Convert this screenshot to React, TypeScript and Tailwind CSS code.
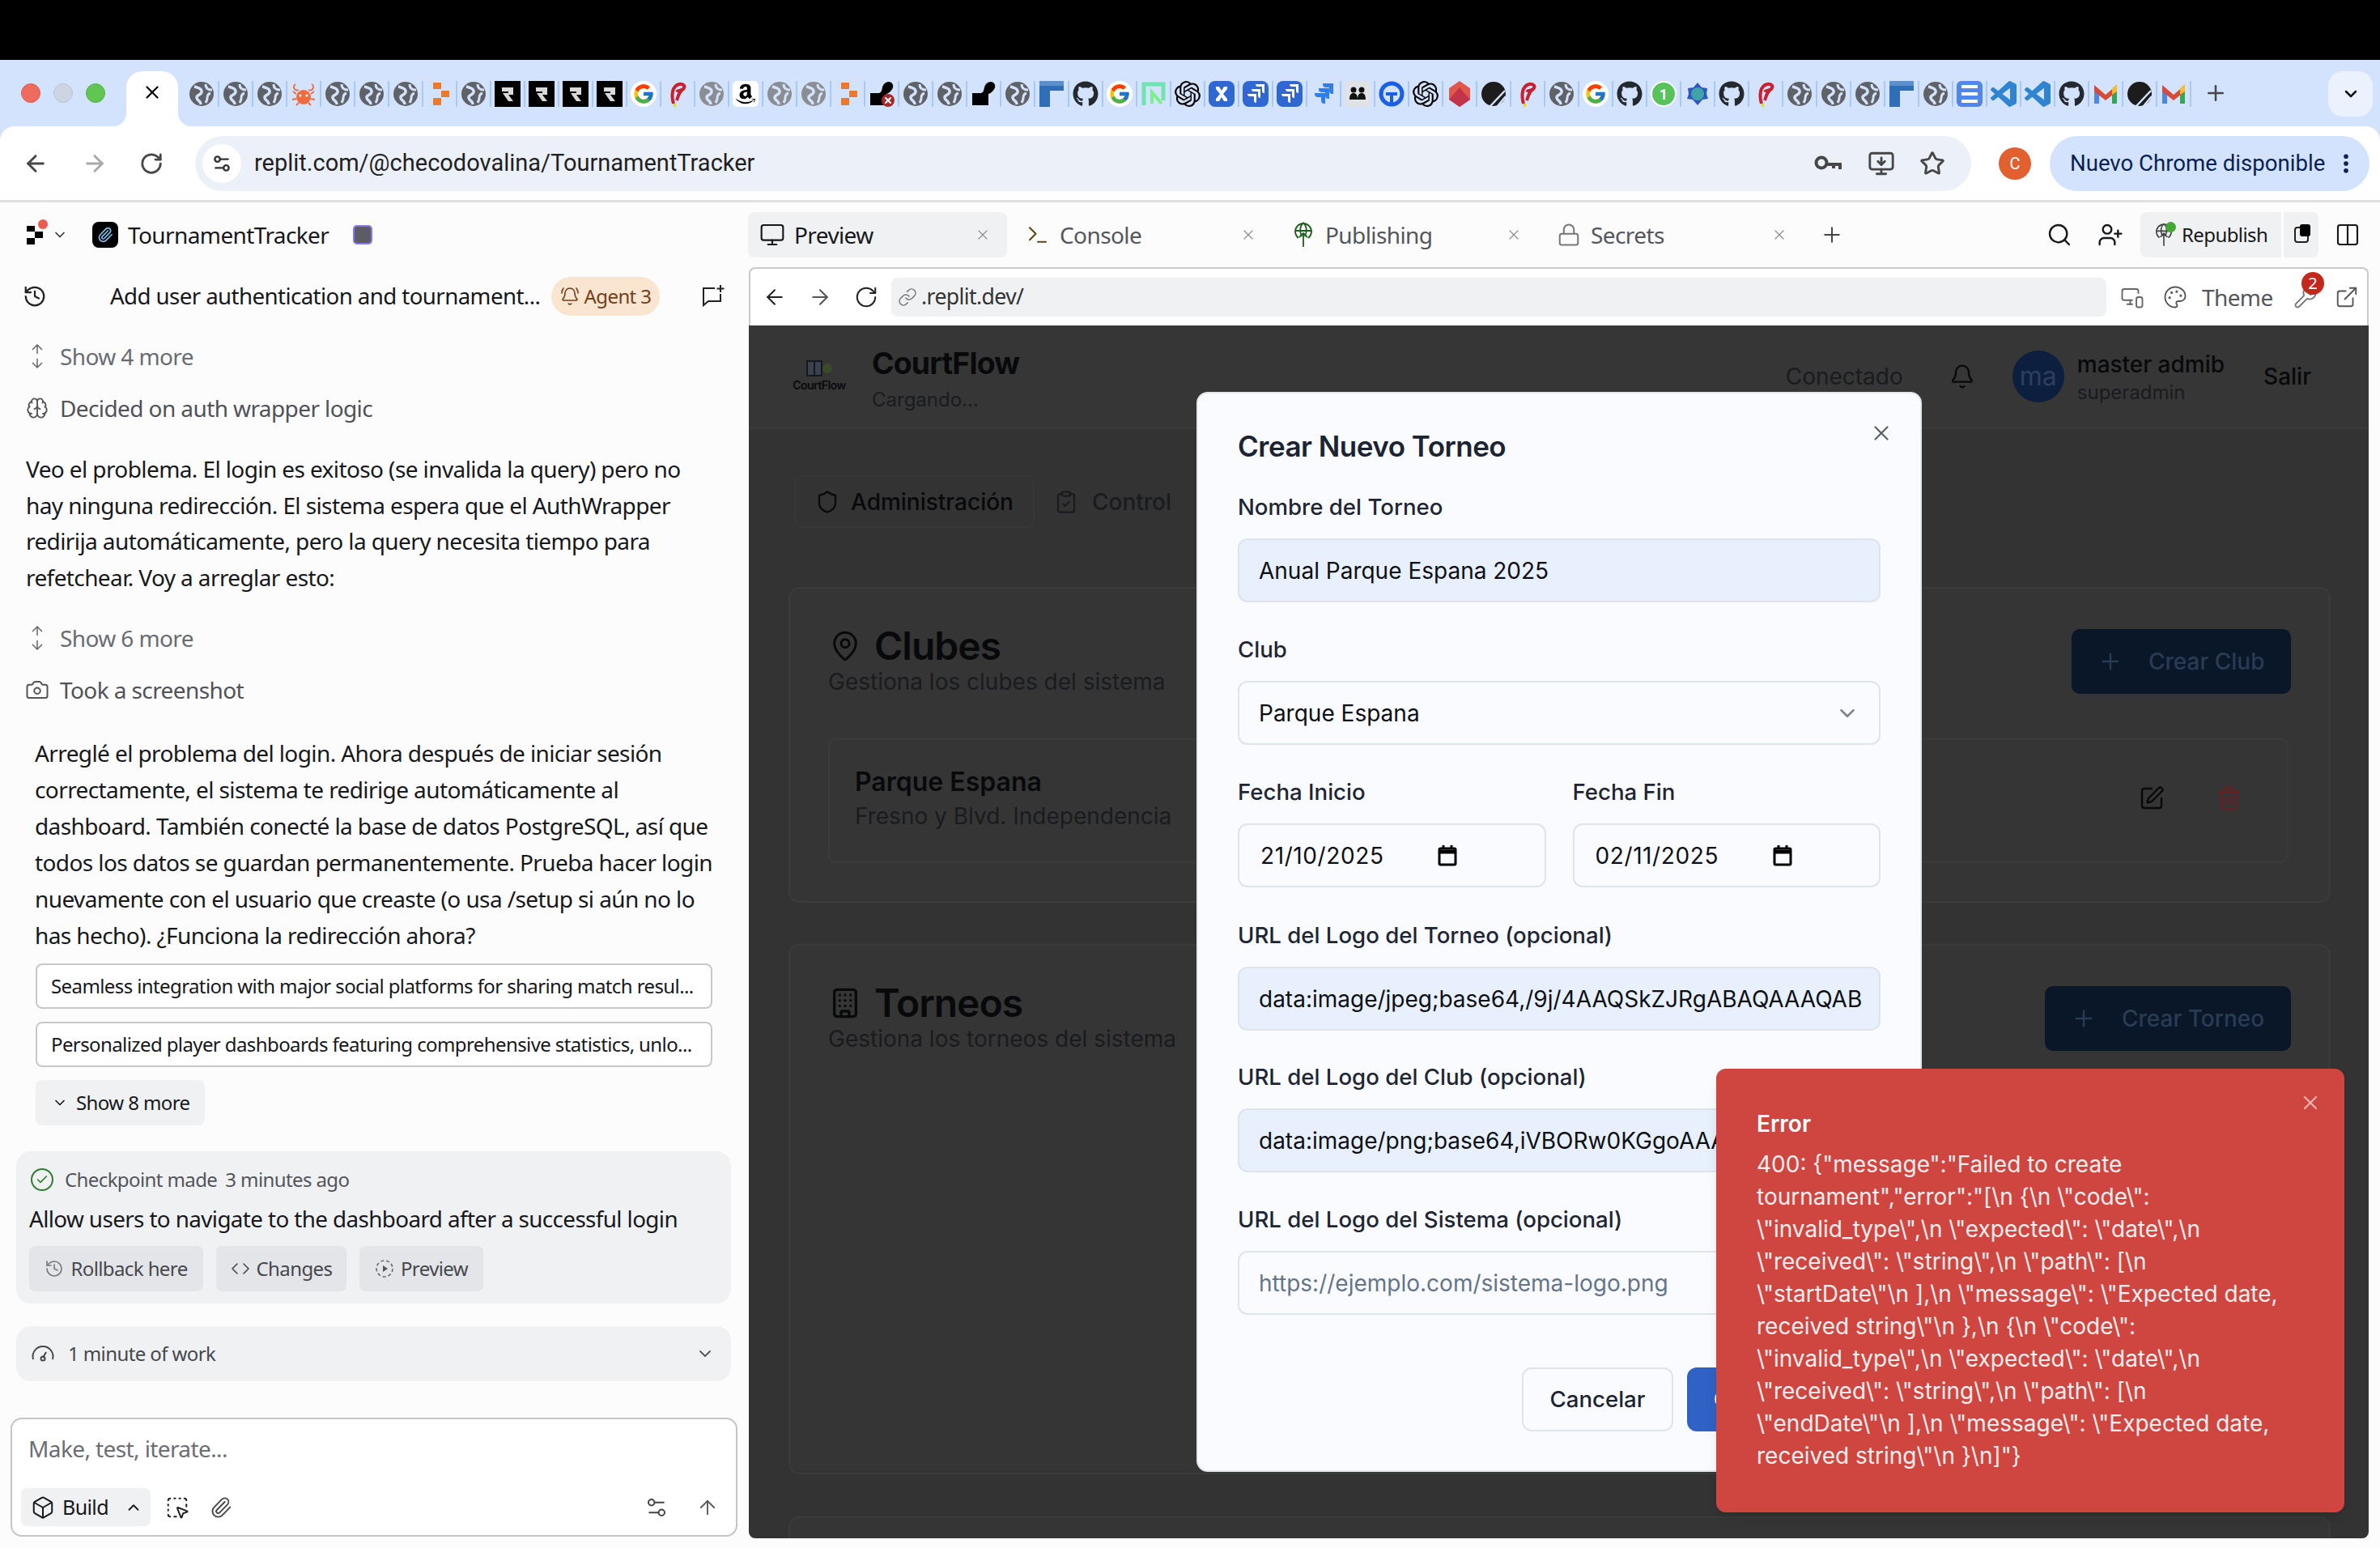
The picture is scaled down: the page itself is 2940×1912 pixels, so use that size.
import {
  ArrowLeft, ArrowRight, ArrowUp, Bell, BellRing, Box, Brain, Building, Camera, Check, ChevronDown, ChevronUp,
  ClipboardCheck, Code, Columns2, EllipsisVertical, ExternalLink, History, Link, Lock, MapPin,
  Monitor, MonitorDown, MonitorSmartphone, Palette, Paperclip, Plus, RotateCw, Search, Settings2, Shield,
  SquareDashedMousePointer, SquarePen, Star, Terminal, Trash2, UserPlus, Wrench, X,
} from 'lucide-react'
import { FaAmazon, FaGithub } from 'react-icons/fa'
import { FcGoogle } from 'react-icons/fc'
import { SiOpenai } from 'react-icons/si'

const favicons = [
  'globe', 'globe', 'globe', 'crab', 'globe', 'globe', 'globe', 'blocks', 'globe', 'r', 'r', 'r', 'r', 'google', 'pink',
  'dim', 'amazon', 'dim', 'dim', 'blocks', 'blackx', 'globe', 'globe', 'black', 'globe', 'framer', 'github', 'google',
  'neon', 'openai', 'bluex', 'jira', 'jira', 'jiralight', 'people', 'blueg', 'openai', 'gem', 'dark', 'pink', 'globe',
  'google', 'github', 'whatsapp', 'flower', 'github', 'pink', 'globe', 'globe', 'globe', 'framer', 'globe', 'docs', 'vs',
  'vs', 'github', 'gmail', 'dark', 'gmail',
]

function GlobeIcon({ dim }: { dim?: boolean }) {
  return (
    <svg viewBox="0 0 32 32" className="h-8 w-8">
      <circle cx="16" cy="16" r="15" fill={dim ? '#8a8d91' : '#5f6368'} />
      <path d="M7 7c5 1 10 3 9 7s-7 3-6 7 5 3 5 8" fill="none" stroke="#d3e3fd" strokeWidth="3.4" />
      <path d="M21 4c0 4 2 7 8 7M27 15c-3 1-4 3-4 6s-1 4-2 6" fill="none" stroke="#d3e3fd" strokeWidth="3" />
    </svg>
  )
}

function JiraMark({ color, heavy }: { color: string; heavy?: boolean }) {
  return (
    <svg viewBox="0 0 32 32" className="h-8 w-8" fill={color} stroke={heavy ? color : 'none'} strokeWidth="2">
      <path d="M16 4h11v11a3 3 0 0 1-3-3V7h-5a3 3 0 0 1-3-3z" />
      <path d="M11 10h11v11a3 3 0 0 1-3-3v-5h-5a3 3 0 0 1-3-3z" />
      <path d="M6 16h11v11a3 3 0 0 1-3-3v-5H9a3 3 0 0 1-3-3z" />
    </svg>
  )
}

function Favicon({ kind }: { kind: string }) {
  switch (kind) {
    case 'globe':
      return <GlobeIcon />
    case 'dim':
      return <GlobeIcon dim />
    case 'crab':
      return (
        <svg viewBox="0 0 32 32" className="h-8 w-8">
          <circle cx="16" cy="20" r="9" fill="#ee6c3e" />
          <path d="M6 4a4 4 0 1 0 4 7M26 4a4 4 0 1 1-4 7M7 16 3 13M25 16l4-3M7 22l-5 1M25 22l5 1M10 27l-3 3M22 27l3 3" fill="none" stroke="#ee6c3e" strokeWidth="2" />
          <circle cx="12" cy="18" r="1.5" fill="#fff" />
          <circle cx="20" cy="18" r="1.5" fill="#fff" />
        </svg>
      )
    case 'blocks':
      return (
        <svg viewBox="0 0 32 32" className="h-8 w-8">
          <path d="M8 2h10v8H8zM18 12h10v8H18zM8 21h10v9H8z" fill="#ed7a2c" />
        </svg>
      )
    case 'r':
      return (
        <div className="flex h-8 w-8 items-center justify-center bg-black">
          <svg viewBox="0 0 32 32" className="h-8 w-8">
            <path d="M9 8h14v9h-6l6 8h-6l-7-10h7v-2H9z" fill="#d9d9d9" />
          </svg>
        </div>
      )
    case 'google':
      return (
        <div className="flex h-8 w-8 items-center justify-center rounded-full bg-white">
          <FcGoogle className="h-7 w-7" />
        </div>
      )
    case 'pink':
      return (
        <svg viewBox="0 0 32 32" className="h-8 w-8">
          <path d="M11 28C8 18 9 6 18 4c6-1 8 3 5 6-3 2-7 3-8 1M15 24c2-6 3-11 8-14" fill="none" stroke="#c8202f" strokeWidth="4" />
          <rect x="11" y="28" width="3" height="4" fill="#f2d21b" />
        </svg>
      )
    case 'amazon':
      return (
        <div className="flex h-8 w-8 items-center justify-center rounded-md bg-white">
          <FaAmazon className="h-7 w-7 text-black" />
        </div>
      )
    case 'blackx':
    case 'black':
      return (
        <div className="relative h-8 w-8">
          <svg viewBox="0 0 32 32" className="h-8 w-8">
            <path d="M2 30V15h10c3 0 4-2 5-7 1-4 4-7 8-7s6 4 5 7-4 7-8 8v14z" fill="#000" />
          </svg>
          {kind === 'blackx' && (
            <div className="absolute right-0 bottom-0 flex h-4 w-4 items-center justify-center rounded-full bg-[#a52a2a]">
              <X className="h-3 w-3 text-white" strokeWidth={4} />
            </div>
          )}
        </div>
      )
    case 'framer':
      return (
        <svg viewBox="0 0 32 32" className="h-8 w-8">
          <path d="M1 0h30v6H1z" fill="#5b8fd0" />
          <path d="M1 6h30v6H14v20H1z" fill="#2f6fb8" />
        </svg>
      )
    case 'github':
      return <FaGithub className="h-8 w-8 text-[#24292f]" />
    case 'neon':
      return (
        <svg viewBox="0 0 32 32" className="h-8 w-8">
          <path d="M4 30V4h24v20" fill="none" stroke="#6fe3b0" strokeWidth="5" />
          <path d="M14 28V14l12 14" fill="none" stroke="#7cf08a" strokeWidth="4" />
        </svg>
      )
    case 'openai':
      return <SiOpenai className="h-8 w-8 text-black" />
    case 'bluex':
      return (
        <div className="flex h-8 w-8 items-center justify-center rounded-lg bg-[#2f67d3]">
          <svg viewBox="0 0 32 32" className="h-8 w-8">
            <path d="M9 7h4l3 5 3-5h4v3l-5 6 5 6v3h-4l-3-5-3 5H9v-3l5-6-5-6z" fill="#fff" />
          </svg>
        </div>
      )
    case 'jira':
      return (
        <div className="flex h-8 w-8 items-center justify-center rounded-lg bg-[#2f67d3]">
          <JiraMark color="#fff" />
        </div>
      )
    case 'jiralight':
      return <JiraMark color="#2d7ff0" heavy />
    case 'people':
      return (
        <div className="flex h-8 w-8 items-center justify-center rounded-md bg-[#e0e2e6]">
          <svg viewBox="0 0 32 32" className="h-8 w-8">
            <circle cx="11" cy="11" r="3.5" fill="#111" />
            <circle cx="21" cy="11" r="3.5" fill="#111" />
            <path d="M6 23c0-6 2-8 5-8s5 2 5 8zM16 23c0-6 2-8 5-8s5 2 5 8z" fill="#111" />
          </svg>
        </div>
      )
    case 'blueg':
      return (
        <svg viewBox="0 0 32 32" className="h-8 w-8">
          <circle cx="16" cy="16" r="13" fill="none" stroke="#1a5fe8" strokeWidth="5" />
          <path d="M9 16h14M16 16v13" stroke="#1a5fe8" strokeWidth="4" />
        </svg>
      )
    case 'gem':
      return (
        <svg viewBox="0 0 32 32" className="h-8 w-8">
          <path d="M16 0 29 9v14L16 32 3 23V9z" fill="#e2574c" />
          <path d="M16 8 29 23 16 32 3 23z" fill="#c2344a" />
        </svg>
      )
    case 'dark':
      return (
        <svg viewBox="0 0 32 32" className="h-8 w-8">
          <circle cx="16" cy="16" r="15" fill="#1c1c1c" />
          <path d="M12 31 30 12M21 31l10-12" stroke="#d3e3fd" strokeWidth="2.5" />
        </svg>
      )
    case 'whatsapp':
      return (
        <div className="flex h-8 w-8 items-center justify-center rounded-full border-2 border-white bg-[#58c35c] text-[18px] font-bold text-white [font-family:Roboto,sans-serif]">
          1
        </div>
      )
    case 'flower':
      return (
        <svg viewBox="0 0 32 32" className="h-8 w-8">
          <path d="M16 2l5 6 7 1-1 7 2 6-7 1-6 7-6-7-7-1 2-6-1-7 7-1z" fill="#2f54c4" />
          <circle cx="16" cy="16" r="8" fill="#3fa3a8" />
        </svg>
      )
    case 'docs':
      return (
        <div className="flex h-8 w-8 flex-col items-center justify-center gap-[5px] rounded-md bg-[#5186ec]">
          <div className="h-[4px] w-[20px] bg-white" />
          <div className="h-[4px] w-[20px] bg-white" />
          <div className="h-[4px] w-[20px] bg-white" />
        </div>
      )
    case 'vs':
      return (
        <svg viewBox="0 0 24 24" className="h-8 w-8">
          <path d="M23.15 2.587L18.21.21a1.494 1.494 0 0 0-1.705.29l-9.46 8.63-4.12-3.128a.999.999 0 0 0-1.276.057L.327 7.261A1 1 0 0 0 .326 8.74L3.899 12 .326 15.26a1 1 0 0 0 .001 1.479L1.65 17.94a.999.999 0 0 0 1.276.057l4.12-3.128 9.46 8.63a1.492 1.492 0 0 0 1.704.29l4.942-2.377A1.5 1.5 0 0 0 24 20.06V3.939a1.5 1.5 0 0 0-.85-1.352zm-5.146 14.861L10.826 12l7.178-5.448v10.896z" fill="#2f84d0" />
        </svg>
      )
    default:
      return (
        <svg viewBox="0 0 32 32" className="h-8 w-8">
          <path d="M2 7v21h6V14z" fill="#4a87ec" />
          <path d="M30 7v21h-6V14z" fill="#33a852" />
          <path d="M2 5 16 17 30 5v8L16 24 2 13z" fill="#d64a37" />
          <path d="M24 9l6-5v9l-6 4z" fill="#f4bd2a" />
        </svg>
      )
  }
}

function ChromeTabs() {
  return (
    <div className="flex h-[82px] bg-[#d3e3fd]">
      <div className="flex h-[82px] w-[156px] shrink-0 items-start gap-[16px] pl-[26px] pt-[29px]">
        <div className="h-[24px] w-[24px] rounded-full border border-[#d95c50] bg-[#ef6b5f]" />
        <div className="h-[24px] w-[24px] rounded-full border border-[#bcc4d2] bg-[#cdd5e3]" />
        <div className="h-[24px] w-[24px] rounded-full border border-[#54b048] bg-[#61c554]" />
      </div>
      <div className="relative mt-[14px] flex h-[68px] w-[64px] shrink-0 justify-center rounded-t-[20px] bg-white pt-[13px]">
        <X className="h-[26px] w-[26px] text-black" strokeWidth={2} />
        <svg viewBox="0 0 16 16" className="absolute bottom-0 left-[-16px] h-4 w-4">
          <path d="M16 0v16H0C9 16 16 9 16 0z" fill="#fff" />
        </svg>
        <svg viewBox="0 0 16 16" className="absolute right-[-16px] bottom-0 h-4 w-4">
          <path d="M0 0v16h16C7 16 0 9 0 0z" fill="#fff" />
        </svg>
      </div>
      <div className="ml-[8px] flex h-[32px] translate-y-[26px]">
        {favicons.map((kind, i) => (
          <div key={i} className="relative flex h-[32px] w-[42px] shrink-0 justify-center">
            <Favicon kind={kind} />
            <div className="absolute top-0 right-[-1px] h-[32px] w-[2px] bg-[#a8c7fa]" />
          </div>
        ))}
      </div>
      <div className="ml-[15px] flex h-[82px] w-[32px] items-start justify-center pt-[26px]">
        <Plus className="h-[30px] w-[30px] text-[#444746]" strokeWidth={2} />
      </div>
      <div className="ml-[123px] mt-[14px] flex h-[56px] w-[55px] items-center justify-center rounded-[18px] bg-[#ecf2fd]">
        <ChevronDown className="h-[24px] w-[24px] text-[#111]" strokeWidth={2.5} />
      </div>
    </div>
  )
}

function ChromeToolbar() {
  return (
    <div className="bg-[#d3e3fd]">
      <div className="flex h-[94px] items-start rounded-t-[18px] border-b-[3px] border-[#e1e1e1] bg-white pt-[12px] [font-family:Roboto,sans-serif]">
        <div className="flex h-[68px] w-[241px] shrink-0 items-center pl-[28px]">
          <ArrowLeft className="h-[32px] w-[32px] text-[#474747]" strokeWidth={2.2} />
          <ArrowRight className="ml-[41px] h-[32px] w-[32px] text-[#a9a9a9]" strokeWidth={2.2} />
          <RotateCw className="ml-[39px] h-[30px] w-[30px] text-[#474747]" strokeWidth={2.2} />
        </div>
        <div className="flex h-[68px] w-[2194px] items-center rounded-full bg-[#ecf0f9] pl-[9px]">
          <div className="flex h-[48px] w-[48px] items-center justify-center rounded-full bg-white">
            <Settings2 className="h-[26px] w-[26px] text-[#333]" strokeWidth={2.2} />
          </div>
          <span className="ml-[16px] text-[29px] text-[#1f1f1f]">replit.com/@checodovalina/TournamentTracker</span>
          <svg viewBox="0 0 36 24" className="ml-auto h-[24px] w-[36px]">
            <circle cx="9" cy="11" r="6.5" fill="none" stroke="#474747" strokeWidth="4" />
            <path d="M15 11h19v8h-4v-4h-4v3h-4v-3h-7z" fill="#474747" />
          </svg>
          <MonitorDown className="ml-[30px] h-[34px] w-[34px] text-[#474747]" strokeWidth={2} />
          <Star className="ml-[30px] mr-[32px] h-[32px] w-[32px] text-[#474747]" strokeWidth={2.2} />
        </div>
        <div className="ml-[34px] flex h-[68px] w-[40px] items-center justify-center">
          <div className="flex h-[40px] w-[40px] items-center justify-center rounded-full bg-[#e2602f] text-[20px] text-white">C</div>
        </div>
        <div className="ml-[23px] flex h-[68px] w-[395px] items-center justify-between rounded-full bg-[#d3e3fd] pl-[25px] pr-[14px] text-[27.6px] text-[#0a1f55]">
          <span>Nuevo Chrome disponible</span>
          <EllipsisVertical className="h-[30px] w-[30px] text-[#0a1f55]" strokeWidth={2.5} />
        </div>
      </div>
    </div>
  )
}

function ReplitMark() {
  return (
    <div className="relative h-[24px] w-[22px]">
      <svg viewBox="0 0 22 24" className="h-[24px] w-[22px]">
        <path d="M0 1h10v7H0zM10 8h10v8H10zM0 16h10v8H0z" fill="#000" />
      </svg>
      <div className="absolute top-[-7px] right-[-4px] h-[12px] w-[12px] rounded-full bg-[#ea5a4f]" />
    </div>
  )
}

function ExpandGlyph() {
  return (
    <svg viewBox="0 0 20 32" className="h-[32px] w-[20px]" fill="none" stroke="#666" strokeWidth="1.5">
      <path d="M10 13V2M4 8l6-6 6 6M10 19v11M4 24l6 6 6-6" />
    </svg>
  )
}

function StepRow({ icon, text, faded, className }: { icon: React.ReactNode; text: string; faded?: boolean; className: string }) {
  return (
    <div className={`flex h-[40px] items-center pl-[30px] ${className}`}>
      <div className="flex w-[32px] justify-center">{icon}</div>
      <span className={`ml-[12px] text-[28px] ${faded ? 'text-[#696c72]' : 'text-[#4f5258]'}`}>{text}</span>
    </div>
  )
}

function Chip({ icon, text, width }: { icon: React.ReactNode; text: string; width: string }) {
  return (
    <div className={`flex h-[56px] items-center justify-center gap-[8px] rounded-[8px] bg-[#e4e5e8] text-[24px] text-[#45484d] ${width}`}>
      {icon}
      {text}
    </div>
  )
}

const firstReply = [
  'Veo el problema. El login es exitoso (se invalida la query) pero no',
  'hay ninguna redirección. El sistema espera que el AuthWrapper',
  'redirija automáticamente, pero la query necesita tiempo para',
  'refetchear. Voy a arreglar esto:',
]

const secondReply = [
  'Arreglé el problema del login. Ahora después de iniciar sesión',
  'correctamente, el sistema te redirige automáticamente al',
  'dashboard. También conecté la base de datos PostgreSQL, así que',
  'todos los datos se guardan permanentemente. Prueba hacer login',
  'nuevamente con el usuario que creaste (o usa /setup si aún no lo',
  'has hecho). ¿Funciona la redirección ahora?',
]

function AgentPanel() {
  return (
    <aside className="flex h-full w-[924px] shrink-0 flex-col bg-[#fcfcfc] text-[#16181c] [font-family:'Noto_Sans',sans-serif] tracking-[-0.6px]">
      <div className="mt-[12px] flex h-[56px] items-center pl-[33px]">
        <ReplitMark />
        <ChevronDown className="ml-[9px] h-[20px] w-[20px] text-[#333]" />
        <div className="ml-[30px] flex h-[32px] w-[32px] items-center justify-center rounded-[8px] bg-black">
          <Paperclip className="h-[20px] w-[20px] text-[#7cc3f0]" />
        </div>
        <span className="ml-[12px] text-[28px]">TournamentTracker</span>
        <div className="ml-[30px] flex h-[24px] w-[24px] items-center justify-center rounded-[5px] border-2 border-[#8a76f0] bg-[#5c5c66]" />
      </div>
      <div className="mt-[24px] flex h-[48px] items-center pl-[28px]">
        <History className="h-[30px] w-[30px] text-[#222]" strokeWidth={1.8} />
        <span className="ml-[78px] w-[531px] whitespace-nowrap text-[27.7px]">Add user authentication and tournament...</span>
        <div className="ml-[14px] flex h-[48px] w-[134px] items-center justify-center gap-[6px] rounded-full bg-[#f9e5d0] text-[24px] text-[#72401a]">
          <BellRing className="h-[24px] w-[24px]" strokeWidth={1.6} />
          Agent 3
        </div>
        <svg viewBox="0 0 32 32" className="ml-[50px] h-[32px] w-[32px]" fill="none" stroke="#222" strokeWidth="2">
          <path d="M18 6H4v21l6-5h15v-9M25 2v9M20.5 6.5h9" />
        </svg>
      </div>
      <StepRow className="mt-[30px]" faded text="Show 4 more" icon={<ExpandGlyph />} />
      <StepRow className="mt-[24px]" text="Decided on auth wrapper logic" icon={<Brain className="h-[28px] w-[28px] text-[#555]" strokeWidth={1.6} />} />
      <div className="mt-[33px] pl-[32px] text-[28px] leading-[44.5px]">
        {firstReply.map((line) => (
          <div key={line} className="whitespace-nowrap">{line}</div>
        ))}
      </div>
      <StepRow className="mt-[33px]" faded text="Show 6 more" icon={<ExpandGlyph />} />
      <StepRow className="mt-[24px]" text="Took a screenshot" icon={<Camera className="h-[30px] w-[30px] text-[#555]" strokeWidth={1.6} />} />
      <div className="mt-[36px] pl-[43px] text-[28px] leading-[45px]">
        {secondReply.map((line) => (
          <div key={line} className="whitespace-nowrap">{line}</div>
        ))}
      </div>
      <div className="ml-[44px] mt-[12px] flex h-[56px] w-[836px] items-center rounded-[8px] border-2 border-[#c8c8c8] bg-white pl-[17px] text-[24px]">
        Seamless integration with major social platforms for sharing match resul...
      </div>
      <div className="ml-[44px] mt-[16px] flex h-[56px] w-[836px] items-center rounded-[8px] border-2 border-[#c8c8c8] bg-white pl-[17px] text-[24px]">
        Personalized player dashboards featuring comprehensive statistics, unlo...
      </div>
      <div className="ml-[44px] mt-[16px] flex h-[56px] w-[209px] items-center gap-[10px] rounded-[8px] bg-[#f0f1f2] pl-[20px] text-[24px]">
        <ChevronDown className="h-[20px] w-[20px]" />
        Show 8 more
      </div>
      <div className="ml-[20px] mt-[32px] flex h-[188px] w-[883px] flex-col rounded-[18px] bg-[#f0f1f3] px-[16px] pt-[20px]">
        <div className="flex h-[30px] items-center pl-[2px] text-[24px] text-[#52555b]">
          <div className="flex h-[28px] w-[28px] items-center justify-center rounded-full border-2 border-[#2f7d32]">
            <Check className="h-[16px] w-[16px] text-[#2f7d32]" strokeWidth={2.5} />
          </div>
          <span className="ml-[14px]">Checkpoint made</span>
          <span className="ml-[10px]">3 minutes ago</span>
        </div>
        <div className="mt-[15px] text-[27.8px] leading-[36px]">Allow users to navigate to the dashboard after a successful login</div>
        <div className="mt-[16px] flex gap-[16px]">
          <Chip width="w-[215px]" text="Rollback here" icon={<History className="h-[24px] w-[24px] text-[#777]" strokeWidth={1.6} />} />
          <Chip width="w-[161px]" text="Changes" icon={<Code className="h-[24px] w-[24px]" strokeWidth={1.6} />} />
          <Chip width="w-[153px]" text="Preview" icon={
            <svg viewBox="0 0 24 24" className="h-[24px] w-[24px]">
              <circle cx="12" cy="12" r="10" fill="none" stroke="#666" strokeWidth="1.6" strokeDasharray="4 3" />
              <path d="M10 8l6 4-6 4z" fill="#555" />
            </svg>
          } />
        </div>
      </div>
      <div className="ml-[20px] mt-[28px] flex h-[68px] w-[883px] items-center rounded-[18px] bg-[#f0f1f3] pl-[18px] pr-[20px] text-[24px] text-[#45484d]">
        <svg viewBox="0 0 30 30" className="h-[30px] w-[30px]" fill="none" stroke="currentColor" strokeWidth="2">
          <path d="M3 22a12.5 12.5 0 1 1 24 0M15 20l4-7" />
          <circle cx="15" cy="21" r="2.5" />
        </svg>
        <span className="ml-[16px]">1 minute of work</span>
        <ChevronDown className="ml-auto h-[24px] w-[24px] text-[#555]" strokeWidth={1.8} />
      </div>
      <div className="ml-[13px] mt-[45px] flex h-[147px] w-[898px] flex-col rounded-[14px] border-2 border-[#c5c5c5] bg-white px-[11px]">
        <div className="mt-[18px] pl-[9px] text-[28px] leading-[36px] text-[#6b6e73]">Make, test, iterate...</div>
        <div className="mt-[31px] flex items-center">
          <div className="flex h-[47px] w-[160px] items-center rounded-[8px] bg-[#f0f1f2] pl-[12px] text-[25px]">
            <Box className="h-[30px] w-[30px]" strokeWidth={1.6} />
            <span className="ml-[9px]">Build</span>
            <ChevronUp className="ml-[20px] h-[22px] w-[22px]" />
          </div>
          <SquareDashedMousePointer className="ml-[18px] h-[30px] w-[30px] text-[#222]" strokeWidth={1.6} />
          <Paperclip className="ml-[25px] h-[28px] w-[28px] text-[#444]" strokeWidth={1.6} />
          <Settings2 className="ml-auto h-[30px] w-[30px] text-[#444]" strokeWidth={1.6} />
          <ArrowUp className="ml-[34px] mr-[10px] h-[28px] w-[28px] text-[#555]" strokeWidth={1.6} />
        </div>
      </div>
    </aside>
  )
}

function PublishIcon({ className }: { className: string }) {
  return (
    <svg viewBox="0 0 24 32" className={className} fill="none" stroke="currentColor" strokeWidth="1.8">
      <path d="M6 20A10 10 0 1 1 18 20M2 11h20M12 1c-5 5-5 10-2 17M12 1c5 5 5 10 2 17M12 31V14M7 19l5-5 5 5" />
    </svg>
  )
}

function WorkspaceTab({ label, icon, active, className }: { label: string; icon: React.ReactNode; active?: boolean; className: string }) {
  return (
    <div className={`flex h-[56px] w-[320px] items-center rounded-[8px] pl-[14px] pr-[20px] ${active ? 'bg-[#f0f1f3] text-[#16181c]' : 'text-[#53565c]'} ${className}`}>
      <div className="flex w-[32px] justify-center">{icon}</div>
      <span className="ml-[11px] text-[28px]">{label}</span>
      <X className="ml-auto h-[20px] w-[20px] text-[#8e9095]" strokeWidth={1.5} />
    </div>
  )
}

function WorkspaceBar() {
  return (
    <div className="mt-[12px] flex h-[56px] items-center text-[#16181c] [font-family:'Noto_Sans',sans-serif] tracking-[-0.6px]">
      <WorkspaceTab className="" active label="Preview" icon={<Monitor className="h-[32px] w-[32px]" strokeWidth={1.6} />} />
      <WorkspaceTab className="ml-[8px]" label="Console" icon={<Terminal className="h-[30px] w-[30px] text-[#5c4410]" strokeWidth={1.6} />} />
      <WorkspaceTab className="ml-[8px]" label="Publishing" icon={<PublishIcon className="h-[32px] w-[24px] text-[#1d5e1f]" />} />
      <WorkspaceTab className="ml-[8px]" label="Secrets" icon={<Lock className="h-[30px] w-[30px] text-[#777]" strokeWidth={1.6} />} />
      <Plus className="ml-[20px] h-[30px] w-[30px] text-[#444]" strokeWidth={1.6} />
      <Search className="ml-[250px] h-[32px] w-[32px]" strokeWidth={1.8} />
      <UserPlus className="ml-[31px] h-[32px] w-[32px]" strokeWidth={1.8} />
      <div className="ml-[21px] flex h-[56px] w-[174px] items-center rounded-l-[8px] bg-[#f0f1f3] pl-[18px] text-[24px]">
        <div className="relative">
          <PublishIcon className="h-[32px] w-[22px] text-[#444]" />
          <div className="absolute top-[0px] right-[-4px] h-[13px] w-[13px] rounded-full bg-[#43a838]" />
        </div>
        <span className="ml-[11px]">Republish</span>
      </div>
      <div className="ml-[3px] flex h-[56px] w-[43px] items-center justify-center rounded-r-[8px] bg-[#f0f1f3]">
        <div className="relative h-[20px] w-[18px] rounded-[4px] border-2 border-[#222]">
          <div className="absolute top-[-5px] right-[-4px] h-[15px] w-[13px] rounded-[3px] bg-black" />
        </div>
      </div>
      <Columns2 className="ml-[20px] h-[32px] w-[32px]" strokeWidth={1.6} />
    </div>
  )
}

function PreviewAddressBar() {
  return (
    <div className="mt-[12px] mr-[14px] ml-[1px] flex h-[72px] items-center rounded-t-[8px] border-x-2 border-t-2 border-[#c9c9c9] bg-white pl-[15px] text-[#444] [font-family:'Noto_Sans',sans-serif] tracking-[-0.6px]">
      <ArrowLeft className="h-[30px] w-[30px] text-[#222]" strokeWidth={1.6} />
      <ArrowRight className="ml-[26px] h-[30px] w-[30px] text-[#555]" strokeWidth={1.6} />
      <RotateCw className="ml-[27px] h-[30px] w-[30px] text-[#222]" strokeWidth={1.6} />
      <div className="ml-[16px] flex h-[48px] w-[1501px] items-center rounded-[8px] bg-[#f0f1f3] pl-[8px] text-[26.6px]">
        <Link className="h-[24px] w-[24px] text-[#777]" strokeWidth={1.6} />
        <span className="ml-[5px] text-[#333]">.replit.dev/</span>
      </div>
      <MonitorSmartphone className="ml-[17px] h-[30px] w-[30px] text-[#666]" strokeWidth={1.5} />
      <Palette className="ml-[23px] h-[30px] w-[30px] text-[#555]" strokeWidth={1.5} />
      <span className="ml-[18px] text-[28px] text-[#53565c]">Theme</span>
      <div className="relative ml-[25px]">
        <Wrench className="h-[30px] w-[30px] text-[#777]" strokeWidth={1.5} />
        <div className="absolute top-[-16px] right-[-8px] flex h-[28px] w-[28px] items-center justify-center rounded-full bg-[#c4281c] text-[20px] text-white">2</div>
      </div>
      <ExternalLink className="ml-[21px] h-[30px] w-[30px] text-[#555]" strokeWidth={1.5} />
    </div>
  )
}

function CourtFlowPage() {
  return (
    <div className="text-[#08090b]">
      <header className="flex h-[128px] items-center border-b-2 border-[#3a3a3a] bg-[#363636] pl-[52px] pr-[71px]">
        <div className="flex w-[70px] flex-col items-center">
          <div className="flex items-center">
            <div className="grid h-[20px] w-[20px] grid-cols-2 gap-[2px] bg-[#15181c] p-[2px]">
              <div className="bg-[#3a4250]" />
              <div className="bg-[#3a4250]" />
            </div>
            <div className="h-[12px] w-[12px] rounded-full bg-[#3c4a2c]" />
          </div>
          <span className="text-[14px] font-semibold tracking-[-0.5px]">CourtFlow</span>
        </div>
        <div className="ml-[30px] mt-[6px]">
          <div className="text-[37.3px] font-bold leading-[44px] tracking-[-0.8px]">CourtFlow</div>
          <div className="mt-[8px] text-[24px] leading-[30px] text-[#191b1f]">Cargando...</div>
        </div>
        <span className="ml-auto text-[28px] text-[#191b1f]">Conectado</span>
        <Bell className="ml-[57px] h-[32px] w-[32px]" strokeWidth={1.8} />
        <div className="ml-[46px] flex h-[64px] w-[64px] items-center justify-center rounded-full bg-[#0d1f3f] text-[32px] text-[#2d3f5f]">ma</div>
        <div className="ml-[16px]">
          <div className="mt-[2px] text-[28px] font-medium leading-[36px]">master admib</div>
          <div className="mt-[1px] text-[24px] leading-[32px] text-[#191b1f]">superadmin</div>
        </div>
        <span className="ml-[48px] text-[28px] font-medium">Salir</span>
      </header>
      <div className="ml-[56px] mt-[57px] flex h-[65px] items-center">
        <div className="flex h-[65px] w-[297px] items-center rounded-[10px] border-2 border-[#383838] pl-[24px] text-[28px] font-medium">
          <Shield className="h-[30px] w-[30px]" strokeWidth={1.8} />
          <span className="ml-[14px]">Administración</span>
        </div>
        <ClipboardCheck className="ml-[24px] h-[30px] w-[30px] text-[#191b1f]" strokeWidth={1.8} />
        <span className="ml-[17px] text-[28px] font-medium text-[#191b1f]">Control</span>
      </div>
      <section className="ml-[49px] mr-[47px] mt-[73px] h-[390px] rounded-[14px] border-2 border-[#3b3b3b] bg-[#353535] px-[47px]">
        <div className="mt-[50px] flex items-start justify-between">
          <div className="-mt-[3px]">
            <div className="flex items-center pl-[1px]">
              <MapPin className="h-[40px] w-[40px]" strokeWidth={1.8} />
              <span className="ml-[16px] text-[48px] font-semibold leading-[48px] tracking-[-1px]">Clubes</span>
            </div>
            <div className="mt-[2px] text-[28px] leading-[36px] text-[#191b1f]">Gestiona los clubes del sistema</div>
          </div>
          <div className="flex h-[80px] w-[271px] items-center rounded-[10px] bg-[#0a1729] pl-[32px] text-[28px] text-[#2a3b54]">
            <Plus className="h-[32px] w-[32px]" strokeWidth={1.8} />
            <span className="ml-[31px] font-medium">Crear Club</span>
          </div>
        </div>
        <div className="mt-[52px] flex h-[154px] w-[1804px] items-center justify-between rounded-[10px] border-2 border-[#3b3b3b] pb-[6px] pl-[31px] pr-[56px]">
          <div>
            <div className="text-[32px] font-semibold leading-[40px]">Parque Espana</div>
            <div className="mt-[4px] text-[28px] leading-[36px] text-[#191b1f]">Fresno y Blvd. Independencia</div>
          </div>
          <div className="flex items-center gap-[63px]">
            <SquarePen className="h-[32px] w-[32px]" strokeWidth={1.8} />
            <Trash2 className="h-[32px] w-[32px] text-[#681f1f]" strokeWidth={1.8} />
          </div>
        </div>
      </section>
      <section className="ml-[49px] mr-[47px] mt-[51px] h-[655px] rounded-[14px] border-2 border-[#3b3b3b] bg-[#353535] px-[47px]">
        <div className="mt-[50px] flex items-start justify-between">
          <div className="-mt-[3px]">
            <div className="flex items-center pl-[1px]">
              <Building className="h-[40px] w-[40px]" strokeWidth={2} />
              <span className="ml-[16px] text-[48px] font-semibold leading-[48px] tracking-[-1px]">Torneos</span>
            </div>
            <div className="mt-[2px] text-[28px] leading-[36px] text-[#191b1f]">Gestiona los torneos del sistema</div>
          </div>
          <div className="flex h-[80px] w-[304px] items-center rounded-[10px] bg-[#0a1729] pl-[32px] text-[28px] text-[#2a3b54]">
            <Plus className="h-[32px] w-[32px]" strokeWidth={1.8} />
            <span className="ml-[31px] font-medium">Crear Torneo</span>
          </div>
        </div>
      </section>
      <section className="ml-[49px] mr-[47px] mt-[52px] h-[100px] rounded-[14px] border-2 border-[#3b3b3b] bg-[#353535]" />
    </div>
  )
}

function Field({ label, value, tone, className }: { label: string; value: string; tone: 'filled' | 'empty' | 'placeholder'; className: string }) {
  const box = tone === 'filled' ? 'bg-[#e8f0fe]' : 'bg-transparent'
  const text = tone === 'placeholder' ? 'text-[#64748b]' : 'text-[#0c0f14]'
  return (
    <div className={className}>
      <div className="text-[27.6px] font-medium leading-[36px] text-[#1e2534]">{label}</div>
      <div className={`mt-[21px] flex h-[79px] items-center overflow-hidden rounded-[12px] border-[2.5px] border-[#dfe3ea] pl-[24px] pr-[10px] text-[28px] whitespace-nowrap ${box} ${text}`}>
        {value}
      </div>
    </div>
  )
}

function CalendarGlyph({ className }: { className: string }) {
  return (
    <svg viewBox="0 0 28 28" className={className} fill="none" stroke="#000" strokeWidth="3">
      <rect x="4" y="5" width="20" height="20" rx="1.5" />
      <path d="M4 9h20" strokeWidth="5" />
      <path d="M9 1v4M19 1v4" />
    </svg>
  )
}

function DateField({ label, value, className }: { label: string; value: string; className: string }) {
  return (
    <div className={`w-[381px] ${className}`}>
      <div className="text-[27.6px] font-medium leading-[36px] text-[#1e2534]">{label}</div>
      <div className="mt-[21px] flex h-[79px] items-center rounded-[12px] border-[2.5px] border-[#dfe3ea] pl-[26px] text-[28px] text-[#0c0f14]">
        <span className="w-[153px] tracking-[0.6px]">{value}</span>
        <CalendarGlyph className="ml-[64px] h-[28px] w-[28px]" />
      </div>
    </div>
  )
}

function TournamentDialog() {
  return (
    <div className="absolute top-[82px] left-[553px] h-[1334px] w-[896px] rounded-[14px] border-2 border-[#e3e6ea] bg-[#fafbfe] px-[49px] pt-[43px]">
      <h2 className="text-[35px] font-semibold leading-[44px] tracking-[-0.5px] text-[#1c2433]">Crear Nuevo Torneo</h2>
      <X className="absolute top-[34px] right-[33px] h-[30px] w-[30px] text-[#5b6270]" strokeWidth={1.8} />
      <Field className="mt-[35px]" label="Nombre del Torneo" value="Anual Parque Espana 2025" tone="filled" />
      <div className="relative mt-[40px]">
        <Field className="" label="Club" value="Parque Espana" tone="empty" />
        <ChevronDown className="absolute right-[26px] bottom-[24px] h-[30px] w-[30px] text-[#7a818d]" strokeWidth={2} />
      </div>
      <div className="mt-[40px] flex">
        <DateField label="Fecha Inicio" value="21/10/2025" className="" />
        <DateField label="Fecha Fin" value="02/11/2025" className="ml-[33px]" />
      </div>
      <Field className="mt-[41px]" label="URL del Logo del Torneo (opcional)" value="data:image/jpeg;base64,/9j/4AAQSkZJRgABAQAAAQAB" tone="filled" />
      <Field className="mt-[39px]" label="URL del Logo del Club (opcional)" value="data:image/png;base64,iVBORw0KGgoAAAANSUhEUgAAA" tone="filled" />
      <Field className="mt-[40px]" label="URL del Logo del Sistema (opcional)" value="https://ejemplo.com/sistema-logo.png" tone="placeholder" />
      <div className="mt-[65px] flex justify-end gap-[17px] text-[27.6px] font-medium">
        <div className="flex h-[79px] w-[187px] items-center justify-center rounded-[12px] border-[2.5px] border-[#dfe3ea] text-[#1c2433]">Cancelar</div>
        <div className="flex h-[79px] w-[239px] items-center justify-center rounded-[12px] bg-[#2f62c4] text-white">Crear Torneo</div>
      </div>
    </div>
  )
}

const errorLines = [
  '400: {"message":"Failed to create',
  'tournament","error":"[\\n {\\n \\"code\\":',
  '\\"invalid_type\\",\\n \\"expected\\": \\"date\\",\\n',
  '\\"received\\": \\"string\\",\\n \\"path\\": [\\n',
  '\\"startDate\\"\\n ],\\n \\"message\\": \\"Expected date,',
  'received string\\"\\n },\\n {\\n \\"code\\":',
  '\\"invalid_type\\",\\n \\"expected\\": \\"date\\",\\n',
  '\\"received\\": \\"string\\",\\n \\"path\\": [\\n',
  '\\"endDate\\"\\n ],\\n \\"message\\": \\"Expected date,',
  'received string\\"\\n }\\n]"}',
]

function ErrorToast() {
  return (
    <div className="absolute top-[918px] left-[1195px] h-[548px] w-[776px] rounded-[12px] bg-[#cf4540] pl-[50px] pt-[50px] text-[#fbeeee] shadow-lg">
      <X className="absolute top-[28px] right-[28px] h-[28px] w-[28px] text-[#eeb3b0]" strokeWidth={2} />
      <div className="text-[28px] font-semibold leading-[36px] text-white">Error</div>
      <div className="mt-[12px] text-[28px] leading-[40px]">
        {errorLines.map((line, i) => (
          <div key={i} className="whitespace-nowrap">{line}</div>
        ))}
      </div>
    </div>
  )
}

export default function App() {
  return (
    <div className="flex h-[1912px] w-[2940px] flex-col overflow-hidden bg-white">
      <div className="h-[74px] shrink-0 bg-black" />
      <ChromeTabs />
      <ChromeToolbar />
      <div className="flex min-h-0 flex-1 bg-[#fcfcfc]">
        <AgentPanel />
        <div className="flex min-w-0 flex-1 flex-col">
          <WorkspaceBar />
          <PreviewAddressBar />
          <div className="relative mr-[14px] mb-[12px] ml-[1px] min-h-0 flex-1 overflow-hidden rounded-b-[8px] bg-[#333333] [font-family:Inter,sans-serif]">
            <CourtFlowPage />
            <TournamentDialog />
            <ErrorToast />
          </div>
        </div>
      </div>
    </div>
  )
}
